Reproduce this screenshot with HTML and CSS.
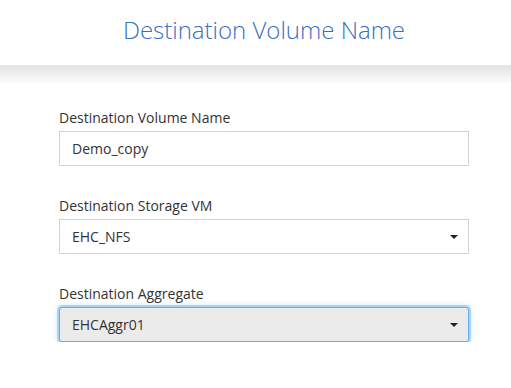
FILE: index.html
```html
<!DOCTYPE html>
<html>
<head>
<meta charset="utf-8">
<link rel="stylesheet" href="styles.css">
</head>
<body>
<header class="header">
  <h1 class="title">Destination Volume Name</h1>
</header>
<main class="form">
  <div class="group">
    <label class="label">Destination Volume Name</label>
    <div class="control">Demo_copy</div>
  </div>
  <div class="group">
    <label class="label">Destination Storage VM</label>
    <div class="control select">EHC_NFS<span class="caret"></span></div>
  </div>
  <div class="group">
    <label class="label">Destination Aggregate</label>
    <div class="control select focus">EHCAggr01<span class="caret"></span></div>
  </div>
</main>
</body>
</html>
```
FILE: styles.css
```css
html, body {
  margin: 0;
  padding: 0;
  background: #fff;
  font-family: "Open Sans", sans-serif;
  color: #333;
}
.header {
  height: 65px;
  background: #fff;
  display: flex;
  align-items: center;
  justify-content: center;
  padding-left: 17px;
  position: relative;
}
.header::after {
  content: "";
  position: absolute;
  left: 0;
  right: 0;
  top: 65px;
  height: 20px;
  background: linear-gradient(#e2e2e2, #fff);
}
.title {
  margin: 0;
  font-weight: 300;
  font-size: 24px;
  color: #3a6fc3;
  padding-bottom: 6px;
}
.form {
  padding: 43px 0 0 59px;
  width: 410px;
  display: flex;
  flex-direction: column;
  gap: 30px;
}
.group {
  display: flex;
  flex-direction: column;
  gap: 3px;
}
.label {
  font-size: 14px;
  line-height: 20px;
  color: #333;
}
.control {
  height: 35px;
  box-sizing: border-box;
  border: 1px solid #ccd3da;
  padding: 0 12px;
  display: flex;
  align-items: center;
  font-size: 14px;
  color: #333;
  background: #fff;
  position: relative;
}
.select .caret {
  position: absolute;
  right: 10px;
  top: 15px;
  width: 0;
  height: 0;
  border-left: 4px solid transparent;
  border-right: 4px solid transparent;
  border-top: 4px solid #222;
}
.focus {
  background: #ebebeb;
  border-color: #66afe9;
  border-radius: 3px;
  box-shadow: 0 0 0 2px rgba(102, 175, 233, 0.45), 0 0 6px rgba(102, 175, 233, 0.5);
}
```
